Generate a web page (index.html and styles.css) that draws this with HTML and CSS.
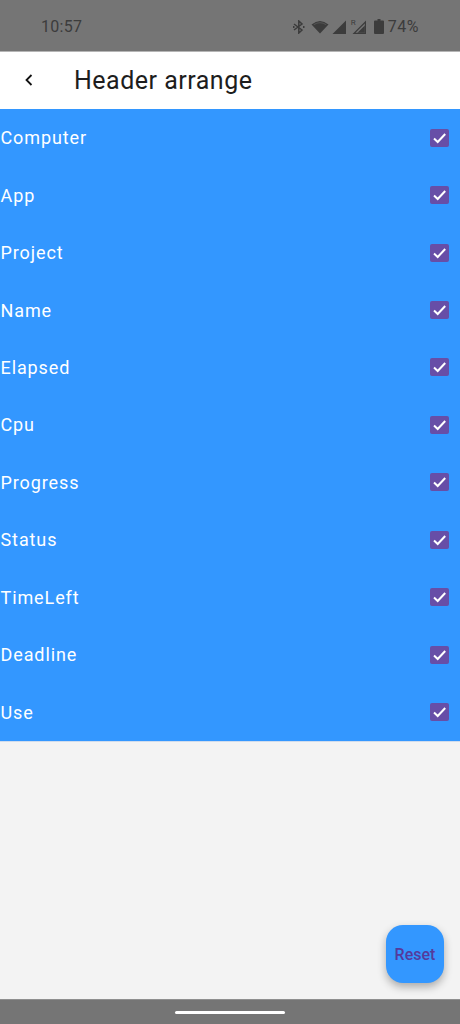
FILE: index.html
```html
<!DOCTYPE html>
<html lang="en">
<head>
	<meta charset="utf-8">
	<title>Header arrange</title>
	<link rel="stylesheet" href="styles.css">
</head>
<body>
<div class="page">
	<div class="status">
		<span class="clock">10:57</span>
		<div class="status-icons">
			<svg class="ic-bt" width="12" height="14" viewBox="0 0 12 14"><path d="M1 4l8 6-3.200 3V1L9 4l-8 6" fill="none" stroke="#3c3c3c" stroke-width="1.500"/><path d="M0 6h1.500v2H0zM10 6h1.500v2H10z" fill="#3c3c3c"/></svg>
			<svg class="ic-wifi" width="18" height="14" viewBox="0 0 18 14"><path d="M0.500 4.500Q9 -2.500 17.500 4.500L9 13.500z" fill="#3c3c3c"/><path d="M2.800 4.700Q9 0.700 15.200 4.700" fill="none" stroke="#5c5c5c" stroke-width="0.800"/></svg>
			<svg class="ic-sig" width="14" height="14" viewBox="0 0 14 14"><path d="M14 0.500V14H0.500z" fill="#3c3c3c"/></svg>
			<span class="roam">
				<span class="roam-r">R</span>
				<svg width="14" height="14" viewBox="0 0 14 14"><path d="M14 0.500V14H0.500zM12.800 3.500L3.500 12.800H12.800z" fill="#3c3c3c" fill-rule="evenodd"/><path d="M12.800 5.500V12.800H5.500z" fill="#3c3c3c"/></svg>
			</span>
			<svg class="ic-bat" width="10" height="15" viewBox="0 0 10 15"><path d="M3.500 0h3v1.500h2.500a1 1 0 0 1 1 1V14a1 1 0 0 1-1 1H1a1 1 0 0 1-1-1V2.500a1 1 0 0 1 1-1h2.500z" fill="#3c3c3c"/></svg>
			<span class="percent">74%</span>
		</div>
	</div>
	<div class="appbar">
		<svg class="back" width="10" height="14" viewBox="0 0 10 14"><path d="M7.500 2L2.500 7l5 5" fill="none" stroke="#111" stroke-width="1.800"/></svg>
		<span class="title">Header arrange</span>
	</div>
	<ul class="list">
		<li class="row"><span>Computer</span><svg class="check" width="19" height="18" viewBox="0 0 19 18"><rect width="19" height="18" rx="2" fill="#674ea7"/><path d="M4 9.500l3.700 3.500 7.500-8" fill="none" stroke="#fff" stroke-width="2"/></svg></li>
		<li class="row"><span>App</span><svg class="check" width="19" height="18" viewBox="0 0 19 18"><rect width="19" height="18" rx="2" fill="#674ea7"/><path d="M4 9.500l3.700 3.500 7.500-8" fill="none" stroke="#fff" stroke-width="2"/></svg></li>
		<li class="row"><span>Project</span><svg class="check" width="19" height="18" viewBox="0 0 19 18"><rect width="19" height="18" rx="2" fill="#674ea7"/><path d="M4 9.500l3.700 3.500 7.500-8" fill="none" stroke="#fff" stroke-width="2"/></svg></li>
		<li class="row"><span>Name</span><svg class="check" width="19" height="18" viewBox="0 0 19 18"><rect width="19" height="18" rx="2" fill="#674ea7"/><path d="M4 9.500l3.700 3.500 7.500-8" fill="none" stroke="#fff" stroke-width="2"/></svg></li>
		<li class="row"><span>Elapsed</span><svg class="check" width="19" height="18" viewBox="0 0 19 18"><rect width="19" height="18" rx="2" fill="#674ea7"/><path d="M4 9.500l3.700 3.500 7.500-8" fill="none" stroke="#fff" stroke-width="2"/></svg></li>
		<li class="row"><span>Cpu</span><svg class="check" width="19" height="18" viewBox="0 0 19 18"><rect width="19" height="18" rx="2" fill="#674ea7"/><path d="M4 9.500l3.700 3.500 7.500-8" fill="none" stroke="#fff" stroke-width="2"/></svg></li>
		<li class="row"><span>Progress</span><svg class="check" width="19" height="18" viewBox="0 0 19 18"><rect width="19" height="18" rx="2" fill="#674ea7"/><path d="M4 9.500l3.700 3.500 7.500-8" fill="none" stroke="#fff" stroke-width="2"/></svg></li>
		<li class="row"><span>Status</span><svg class="check" width="19" height="18" viewBox="0 0 19 18"><rect width="19" height="18" rx="2" fill="#674ea7"/><path d="M4 9.500l3.700 3.500 7.500-8" fill="none" stroke="#fff" stroke-width="2"/></svg></li>
		<li class="row"><span>TimeLeft</span><svg class="check" width="19" height="18" viewBox="0 0 19 18"><rect width="19" height="18" rx="2" fill="#674ea7"/><path d="M4 9.500l3.700 3.500 7.500-8" fill="none" stroke="#fff" stroke-width="2"/></svg></li>
		<li class="row"><span>Deadline</span><svg class="check" width="19" height="18" viewBox="0 0 19 18"><rect width="19" height="18" rx="2" fill="#674ea7"/><path d="M4 9.500l3.700 3.500 7.500-8" fill="none" stroke="#fff" stroke-width="2"/></svg></li>
		<li class="row"><span>Use</span><svg class="check" width="19" height="18" viewBox="0 0 19 18"><rect width="19" height="18" rx="2" fill="#674ea7"/><path d="M4 9.500l3.700 3.500 7.500-8" fill="none" stroke="#fff" stroke-width="2"/></svg></li>
	</ul>
	<div class="empty">
		<button class="reset">Reset</button>
	</div>
	<div class="navbar"><span class="handle"></span></div>
</div>
</body>
</html>
```

FILE: styles.css
```css
html, body {
	margin: 0;
	padding: 0;
}

body {
	font-family: Roboto, "Liberation Sans", sans-serif;
}

.page {
	width: 460px;
	height: 1024px;
	display: flex;
	flex-direction: column;
	background-color: #f3f3f3;
}

.status {
	height: 52px;
	flex: none;
	display: flex;
	align-items: center;
	justify-content: space-between;
	padding: 0 41px;
	box-sizing: border-box;
	background-color: #757575;
	border-bottom: 1px solid #b5b5b5;
	color: #3c3c3c;
}

.clock {
	font-size: 16px;
	letter-spacing: 0.3px;
	margin-top: 2px;
}

.status-icons {
	display: flex;
	align-items: center;
	margin-top: 2px;
}

.ic-bt {
	margin-right: 6px;
}

.ic-wifi {
	margin-right: 3px;
}

.ic-sig {
	margin-right: 6px;
}

.roam {
	position: relative;
	display: flex;
	margin-right: 8px;
}

.roam-r {
	position: absolute;
	left: -1px;
	top: -1px;
	font-size: 8px;
	line-height: 8px;
}

.ic-bat {
	margin-right: 4px;
}

.percent {
	font-size: 16px;
	letter-spacing: 0.5px;
}

.appbar {
	height: 57px;
	flex: none;
	display: flex;
	align-items: center;
	background-color: #ffffff;
}

.back {
	margin-left: 24px;
	margin-top: -1px;
}

.title {
	margin-left: 40px;
	font-size: 25px;
	letter-spacing: 0.5px;
	color: #1d1d1d;
}

.list {
	list-style: none;
	margin: 0;
	padding: 0;
	flex: none;
	background-color: #3397ff;
}

.row {
	height: 57.45px;
	display: flex;
	align-items: center;
	justify-content: space-between;
	padding: 0 11px 0 0.5px;
	color: #ffffff;
	font-size: 18px;
	letter-spacing: 0.9px;
}

.check {
	display: block;
}

.empty {
	flex: 1;
	display: flex;
	justify-content: flex-end;
	align-items: flex-end;
	padding: 0 16px 16px 0;
	border-top: 1px solid #d0dcec;
}

.reset {
	width: 58px;
	height: 58px;
	padding: 0;
	border: none;
	border-radius: 17px;
	background-color: #3397ff;
	color: #553a9c;
	font-family: Roboto, "Liberation Sans", sans-serif;
	font-size: 16px;
	font-weight: 500;
	box-shadow: 0 4px 8px rgba(0,0,0,0.3);
}

.navbar {
	height: 25px;
	flex: none;
	display: flex;
	align-items: center;
	justify-content: center;
	background-color: #757575;
	border-top: 1px solid #8f8f8f;
	box-sizing: border-box;
}

.handle {
	width: 110px;
	height: 3px;
	margin-top: 1px;
	border-radius: 2px;
	background-color: #ffffff;
}
```
